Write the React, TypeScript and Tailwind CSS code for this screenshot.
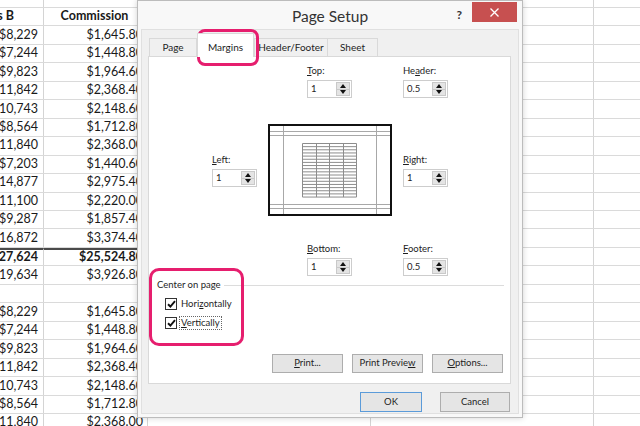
import React from 'react';

const colA = ['$8,229', '$7,244', '$9,823', '$11,842', '$10,743', '$8,564', '$11,840', '$7,203', '$14,877', '$11,100', '$9,287', '$16,872', '$127,624', '$19,634', '', '$8,229', '$7,244', '$9,823', '$11,842', '$10,743', '$8,564', '$11,840'];
const colB = ['$1,645.80', '$1,448.80', '$1,964.60', '$2,368.40', '$2,148.60', '$1,712.80', '$2,368.00', '$1,440.60', '$2,975.40', '$2,220.00', '$1,857.40', '$3,374.40', '$25,524.80', '$3,926.80', '', '$1,645.80', '$1,448.80', '$1,964.60', '$2,368.40', '$2,148.60', '$1,712.80', '$2,368.00'];

const SheetRow = ({ a, b, bold, total }: { a: string; b: string; bold?: boolean; total?: boolean }) => (
    <div className={`flex h-[18.47px] border-b border-[#dadada] ${bold ? 'font-bold' : ''}`}>
        <div className={`flex w-[44px] shrink-0 items-center justify-end overflow-hidden whitespace-nowrap border-r border-[#d4d4d4] pr-[5px] ${total ? 'border-t-2 border-t-[#4a4a4a]' : ''}`}>
            {a}
        </div>
        <div className={`flex w-[104px] shrink-0 items-center justify-end overflow-hidden whitespace-nowrap border-r border-[#d4d4d4] pr-[4px] ${total ? 'border-t-2 border-t-[#4a4a4a]' : ''}`}>
            {b}
        </div>
        <div className="w-[223px] shrink-0 border-r border-[#d4d4d4]" />
        <div className="w-[223px] shrink-0 border-r border-[#d4d4d4]" />
        <div className="flex-1" />
    </div>
);

const HeadRow = () => (
    <div className="flex h-[18.47px] border-b border-[#dadada] font-bold">
        <div className="flex w-[44px] shrink-0 items-center justify-end overflow-hidden whitespace-nowrap border-r border-[#d4d4d4] pr-[29px]">
            Sales B
        </div>
        <div className="flex w-[104px] shrink-0 items-center justify-center overflow-hidden whitespace-nowrap border-r border-[#d4d4d4] pr-[2px]">
            Commission
        </div>
        <div className="w-[223px] shrink-0 border-r border-[#d4d4d4]" />
        <div className="w-[223px] shrink-0 border-r border-[#d4d4d4]" />
        <div className="flex-1" />
    </div>
);

const Arrow = ({ up }: { up?: boolean }) => (
    <svg width="6" height="4" viewBox="0 0 6 4" className="block">
        <path d={up ? 'M3 0L6 4H0z' : 'M0 0H6L3 4z'} fill="#111" />
    </svg>
);

const Spin = ({ label, value }: { label: React.ReactNode; value: string }) => (
    <div className="flex w-[45px] flex-col">
        <div className="h-[14px] whitespace-nowrap leading-[14px]">{label}</div>
        <div className="mt-[2px] flex h-[18px] border border-[#cdcdcd] bg-white">
            <div className="flex-1 pl-[3px] leading-[16px]">{value}</div>
            <div className="my-[1px] mr-[1px] flex w-[14px] flex-col border border-[#c9c9c9] bg-[#e4e4e4]">
                <div className="flex flex-1 items-center justify-center border-b border-[#c9c9c9]">
                    <Arrow up />
                </div>
                <div className="flex flex-1 items-center justify-center">
                    <Arrow />
                </div>
            </div>
        </div>
    </div>
);

const Preview = () => {
    const rows = Array.from({ length: 18 }, (_, i) => 19.5 + i * 3.15);
    const cols = [34.5, 48.5, 61.5, 75.5, 88.5];
    return (
        <svg width="124" height="92" viewBox="0 0 124 92" className="block">
            <rect x="1" y="1" width="122" height="90" fill="white" stroke="#111" strokeWidth="2" />
            <g stroke="#a8a8a8" strokeWidth="1">
                <line x1="15.5" y1="2" x2="15.5" y2="90" />
                <line x1="108.5" y1="2" x2="108.5" y2="90" />
                <line x1="2" y1="7.5" x2="122" y2="7.5" />
                <line x1="2" y1="11.5" x2="122" y2="11.5" />
                <line x1="2" y1="80.5" x2="122" y2="80.5" />
                <line x1="2" y1="84.5" x2="122" y2="84.5" />
            </g>
            <g stroke="#8c8c8c" strokeWidth="1">
                {rows.map((y) => (
                    <line key={y} x1="34.5" y1={y} x2="88.5" y2={y} />
                ))}
                {cols.map((x) => (
                    <line key={x} x1={x} y1="19.5" x2={x} y2={rows[rows.length - 1]} />
                ))}
            </g>
        </svg>
    );
};

const Check = ({ children, focus }: { children: React.ReactNode; focus?: boolean }) => (
    <div className="flex h-[18.5px] items-center">
        <div className="flex h-[12px] w-[12px] items-center justify-center border border-[#333] bg-white">
            <svg width="9" height="8" viewBox="0 0 9 8">
                <path d="M1 4.2L3.4 6.5L8 1.2" stroke="#111" strokeWidth="1.9" fill="none" />
            </svg>
        </div>
        <div className={`ml-[2px] px-[1px] leading-[12px] ${focus ? 'border border-dotted border-[#666]' : 'border border-transparent'}`}>
            {children}
        </div>
    </div>
);

const Btn = ({ children, w, primary }: { children: React.ReactNode; w: string; primary?: boolean }) => (
    <div className={`flex h-full items-center justify-center border bg-[#e5e5e5] ${w} ${primary ? 'border-[#5b9bd9]' : 'border-[#adadad]'}`}>
        {children}
    </div>
);

const App: React.FC = () => {
    return (
        <div className="relative h-[426px] w-[640px] overflow-hidden bg-white font-[Lato,sans-serif] text-[12.5px] text-[#1a1a1a]">
            {/* spreadsheet behind */}
            <div className="-mt-[10.67px] flex flex-col">
                <SheetRow a="" b="" />
                <HeadRow />
                {colA.map((a, i) => (
                    <SheetRow key={i} a={a} b={colB[i]} bold={i === 12} total={i === 12} />
                ))}
            </div>

            {/* Page Setup dialog */}
            <div className="absolute left-[137px] top-0 flex h-[418px] w-[386px] flex-col border border-[#bcbcbc] bg-[#f8f8f8] text-[9.5px] text-[#1e1e1e] shadow-[0_0_6px_rgba(0,0,0,0.18)]">
                <div className="grid h-[28px] grid-cols-[1fr_auto_1fr]">
                    <div />
                    <div className="flex items-center pt-[4px] text-[15.5px] text-[#333]">Page Setup</div>
                    <div className="flex items-start justify-end pr-[5px] pt-[1px]">
                        <div className="mr-[10px] mt-[4px] text-[12px] font-bold text-[#333]">?</div>
                        <div className="flex h-[20px] w-[45px] items-center justify-center bg-[#c75050]">
                            <svg width="9" height="9" viewBox="0 0 9 9">
                                <path d="M0.5 0.5L8.5 8.5M8.5 0.5L0.5 8.5" stroke="white" strokeWidth="1.3" />
                            </svg>
                        </div>
                    </div>
                </div>

                <div className="mx-[3px] mb-[3px] flex flex-1 flex-col border border-[#e0e0e0] bg-[#f0f0f0]">
                    {/* tabs */}
                    <div className="mt-[3px] flex h-[23px] items-end pl-[7px] text-[10px]">
                        <div className="flex h-[18px] w-[48px] items-center justify-center border border-b-0 border-[#d9d9d9] bg-[#f0f0f0]">Page</div>
                        <div className="relative z-10 -mb-px flex h-[24px] w-[57px] items-center justify-center border border-b-0 border-[#d9d9d9] bg-white pt-[3px]">Margins</div>
                        <div className="flex h-[18px] w-[74px] items-center justify-center border border-b-0 border-[#d9d9d9] bg-[#f0f0f0]">Header/Footer</div>
                        <div className="flex h-[18px] w-[50px] items-center justify-center border border-b-0 border-l-0 border-[#d9d9d9] bg-[#f0f0f0]">Sheet</div>
                    </div>

                    {/* panel */}
                    <div className="ml-[6px] flex h-[328px] w-[363px] flex-col border border-[#d9d9d9] bg-white">
                        <div className="grid grid-cols-[56px_124px_auto] gap-y-[26px] pl-[63px] pt-[7px]">
                            <div />
                            <div className="pl-[39px]">
                                <Spin label={<><u>T</u>op:</>} value="1" />
                            </div>
                            <div className="pl-[11px]">
                                <Spin label={<>He<u>a</u>der:</>} value="0.5" />
                            </div>
                            <div className="self-center">
                                <Spin label={<><u>L</u>eft:</>} value="1" />
                            </div>
                            <Preview />
                            <div className="self-center pl-[11px]">
                                <Spin label={<><u>R</u>ight:</>} value="1" />
                            </div>
                            <div />
                            <div className="pl-[39px]">
                                <Spin label={<><u>B</u>ottom:</>} value="1" />
                            </div>
                            <div className="pl-[11px]">
                                <Spin label={<><u>F</u>ooter:</>} value="0.5" />
                            </div>
                        </div>

                        <div className="mt-[2px] flex h-[14px] items-center pl-[8px] pr-[6px]">
                            <span className="whitespace-nowrap">Center on page</span>
                            <div className="ml-[3px] h-px flex-1 bg-[#dcdcdc]" />
                        </div>
                        <div className="mt-[3px] flex flex-col pl-[16px]">
                            <Check>
                                Hori<u>z</u>ontally
                            </Check>
                            <Check focus>
                                <u>V</u>ertically
                            </Check>
                        </div>

                        <div className="mt-[22px] flex h-[19px] justify-end gap-[9px] pr-[7px]">
                            <Btn w="w-[71px]">
                                <span><u>P</u>rint...</span>
                            </Btn>
                            <Btn w="w-[71px]">
                                <span>Print Previe<u>w</u></span>
                            </Btn>
                            <Btn w="w-[71px]">
                                <span><u>O</u>ptions...</span>
                            </Btn>
                        </div>
                    </div>

                    <div className="ml-[6px] mt-[8px] flex h-[20px] w-[363px] justify-end gap-[18px] pr-[1px]">
                        <Btn w="w-[62px]" primary>
                            OK
                        </Btn>
                        <Btn w="w-[70px]">Cancel</Btn>
                    </div>
                </div>
            </div>

            {/* pink highlights */}
            <div className="absolute left-[197px] top-[29px] h-[37px] w-[62px] rounded-[8px] border-[3px] border-[#e61e6e]" />
            <div className="absolute left-[149px] top-[268px] h-[78px] w-[95px] rounded-[10px] border-[3px] border-[#e61e6e]" />
        </div>
    );
};

export default App;
